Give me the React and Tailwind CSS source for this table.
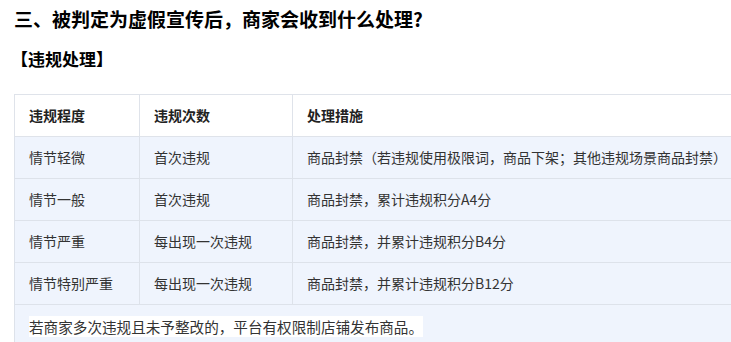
import React from 'react';

const rows = [
  { level: '情节轻微', times: '首次违规', action: '商品封禁（若违规使用极限词，商品下架；其他违规场景商品封禁）' },
  { level: '情节一般', times: '首次违规', action: '商品封禁，累计违规积分A4分' },
  { level: '情节严重', times: '每出现一次违规', action: '商品封禁，并累计违规积分B4分' },
  { level: '情节特别严重', times: '每出现一次违规', action: '商品封禁，并累计违规积分B12分' },
];

const App = () => {
  return (
    <div
      className="w-[731px] h-[342px] overflow-hidden bg-white text-[#222]"
      style={{ fontFamily: '"Noto Sans CJK SC", "Noto Sans", sans-serif' }}
    >
      <h2 className="pl-[14px] pt-[5px] h-[40px] text-[19px] font-bold leading-[28px] text-black">
        三、被判定为虚假宣传后，商家会收到什么处理?
      </h2>
      <h3 className="pl-[11px] pt-[1px] h-[54px] text-[17px] font-bold leading-[36px] text-black">
        【违规处理】
      </h3>

      <table className="ml-[14px] w-[760px] border-collapse text-[14px] table-fixed">
        <colgroup>
          <col className="w-[125px]" />
          <col className="w-[153px]" />
          <col />
        </colgroup>
        <thead>
          <tr className="h-[42px] bg-white">
            <th className="border border-[#dfe3ea] pl-[14px] text-left font-bold text-[#222]">违规程度</th>
            <th className="border border-[#dfe3ea] pl-[14px] text-left font-bold text-[#222]">违规次数</th>
            <th className="border border-[#dfe3ea] pl-[14px] text-left font-bold text-[#222]">处理措施</th>
          </tr>
        </thead>
        <tbody>
          {rows.map((r) => (
            <tr key={r.level} className="h-[42px] bg-[#eff4fd]">
              <td className="border border-[#dde2ea] pl-[14px] text-[#333] whitespace-nowrap">{r.level}</td>
              <td className="border border-[#dde2ea] pl-[14px] text-[#333] whitespace-nowrap">{r.times}</td>
              <td className="border border-[#dde2ea] pl-[14px] text-[#333] whitespace-nowrap">{r.action}</td>
            </tr>
          ))}
          <tr className="h-[46px] bg-[#eff4fd]">
            <td colSpan={3} className="border border-[#dde2ea] pl-[14px] align-top pt-[12px]">
              <span className="bg-white text-[14.6px] leading-[16px] text-[#333] whitespace-nowrap">
                若商家多次违规且未予整改的，平台有权限制店铺发布商品。
              </span>
            </td>
          </tr>
        </tbody>
      </table>
    </div>
  );
};

export default App;
